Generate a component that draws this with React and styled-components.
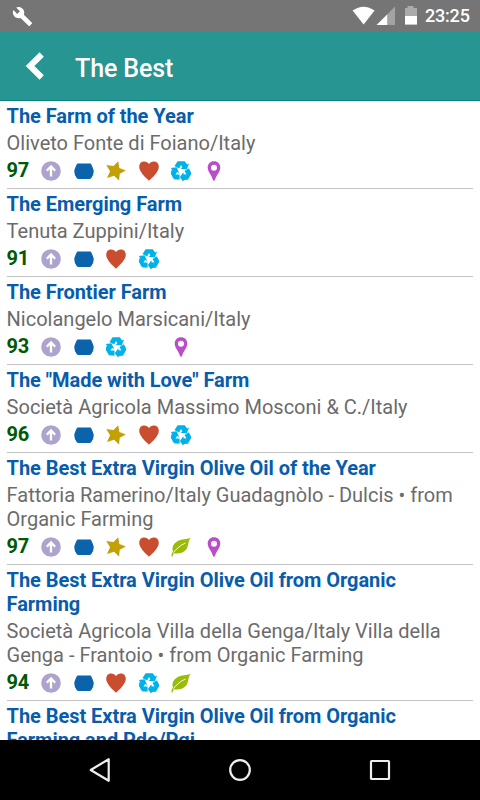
import React from "react";
import styled, { createGlobalStyle } from "styled-components";

const GlobalStyle = createGlobalStyle`
    * {
        box-sizing: border-box;
    }
    body {
        margin: 0;
        background: #fff;
        font-family: Roboto, "Liberation Sans", sans-serif;
    }
`;

const Screen = styled.div`
    display: flex;
    flex-direction: column;
    width: 480px;
    height: 800px;
    overflow: hidden;
`;

const StatusBar = styled.div`
    display: flex;
    flex: none;
    align-items: center;
    justify-content: space-between;
    height: 32px;
    padding: 0 10px 0 12px;
    background: #757575;
    color: #fff;
`;

const StatusIcons = styled.div`
    display: flex;
    align-items: center;
`;

const Clock = styled.span`
    width: 45px;
    margin-left: 8px;
    font-size: 18px;
    line-height: 32px;
    font-weight: 500;
    letter-spacing: -0.2px;
    white-space: nowrap;
`;

const Header = styled.header`
    display: flex;
    flex: none;
    align-items: center;
    height: 69px;
    padding-left: 25px;
    background: #279591;
    border-bottom: 1px solid #07817e;
`;

const Title = styled.h1`
    margin: 5px 0 0 31px;
    color: #fff;
    font-size: 25px;
    font-weight: 500;
    line-height: 32px;
    letter-spacing: -0.1px;
`;

const List = styled.ul`
    flex: 1;
    min-height: 0;
    margin: 0;
    padding: 0 7px 0 6.6px;
    overflow: hidden;
    list-style: none;
`;

const Item = styled.li`
    padding: 3px 0 4px;
    border-bottom: 1px solid #c4c4c6;
    font-size: 20px;
    line-height: 24px;
`;

const ItemTitle = styled.div`
    color: #075dab;
    font-weight: 700;
    letter-spacing: -0.05px;
`;

const ItemText = styled.div`
    margin-top: 3px;
    color: #6b6b6b;
`;

const Awards = styled.div`
    display: flex;
    align-items: center;
    height: 29px;
    padding-top: 2px;
`;

const Score = styled.span`
    width: 28.2px;
    margin-top: -1px;
    color: #005a05;
    font-weight: 700;
    letter-spacing: -0.2px;
`;

const Slot = styled.span`
    display: flex;
    align-items: center;
    justify-content: center;
    width: 32.6px;
    height: 22px;
`;

const NavBar = styled.nav`
    display: flex;
    flex: none;
    align-items: center;
    justify-content: space-between;
    height: 60px;
    padding: 0 88px;
    background: #000;
`;

const arrow = "M6.6.2h7.2l2.3 3.4 2-1-2.4 5.8-6.3-.6 2-1.2L10 3.9 8 7.4 3.5 4.9z";

const icons = {
    up: (
        <svg width="20" height="20" viewBox="0 0 20 20">
            <circle cx="10" cy="10" r="9.8" fill="#aea3cd" />
            <path d="M10 15.5V6M5.8 9.7 10 5.5l4.2 4.2" fill="none" stroke="#fff" strokeWidth="2.3" />
        </svg>
    ),
    bowl: (
        <svg width="20" height="20" viewBox="0 0 20 20">
            <path
                d="M4 2.4h12q1.1 0 1.4 1 .3 1.2 1.3 3 1 2 1 4.4 0 2.8-2.2 6-.8 1.2-2.1 1.2H4.6q-1.3 0-2.1-1.2-2.2-3.2-2.2-6 0-2.4 1-4.4 1-1.8 1.3-3 .3-1 1.4-1z"
                fill="#0b63ab"
            />
        </svg>
    ),
    star: (
        <svg width="20" height="20" viewBox="0 0 20 20">
            <path
                d="M12.2.2 13.4 6.9 19.8 9.6 13.8 12.7 13 19.6 8.1 14.7 1 16.9 4 10.3.3 3.9 7.5 5.1z"
                fill="#c2a006"
            />
        </svg>
    ),
    heart: (
        <svg width="20" height="20" viewBox="0 0 20 20">
            <path
                d="M10 3C8.6.7 5.8-.2 3.3.8-.1 2.2-.5 6.5 1.2 9.6c2 3.9 5.9 7.7 8.8 10.2 2.9-2.5 6.8-6.3 8.8-10.2 1.7-3.1 1.3-7.4-2.1-8.8C14.2-.2 11.4.7 10 3z"
                fill="#cb4d30"
            />
        </svg>
    ),
    recycle: (
        <svg width="20" height="20" viewBox="0 0 20 20" fill="#00b1ea">
            <path d={arrow} />
            <path d={arrow} transform="rotate(120 10 10.3)" />
            <path d={arrow} transform="rotate(240 10 10.3)" />
        </svg>
    ),
    leaf: (
        <svg width="20" height="20" viewBox="0 0 20 20">
            <path
                d="M19.6.8C16 2.6 10.5 1.7 6.1 4.5 2 7 .7 10.4 2 14.6.9 16.2.4 17.5.4 19.6h1.2c0-1.4.5-2.5 1.3-3.4 4.9 1 9.5-.2 12.2-3.6 2.8-3.6 1.6-8 4.5-11.8z"
                fill="#9abb0a"
            />
            <path d="M2.6 15.6C5.8 11.1 9.7 8.2 14.5 6" fill="none" stroke="#fff" strokeWidth=".9" />
        </svg>
    ),
    pin: (
        <svg width="20" height="20" viewBox="0 0 20 20">
            <path
                d="M10 .3c3.8 0 6.3 2.6 6.3 6.3 0 4.4-3.6 7-5.3 12.3-.3 1.1-1.7 1.1-2 0C7.3 13.6 3.7 11 3.7 6.6 3.7 2.9 6.2.3 10 .3zm0 3.4a3 3 0 1 0 0 6 3 3 0 0 0 0-6z"
                fill="#b84fc9"
                fillRule="evenodd"
            />
        </svg>
    ),
};

const farms = [
    {
        title: "The Farm of the Year",
        text: "Oliveto Fonte di Foiano/Italy",
        score: 97,
        awards: ["up", "bowl", "star", "heart", "recycle", "pin"],
    },
    {
        title: "The Emerging Farm",
        text: "Tenuta Zuppini/Italy",
        score: 91,
        awards: ["up", "bowl", "heart", "recycle"],
    },
    {
        title: "The Frontier Farm",
        text: "Nicolangelo Marsicani/Italy",
        score: 93,
        awards: ["up", "bowl", "recycle", "", "pin"],
    },
    {
        title: 'The "Made with Love" Farm',
        text: "Società Agricola Massimo Mosconi & C./Italy",
        score: 96,
        awards: ["up", "bowl", "star", "heart", "recycle"],
    },
    {
        title: "The Best Extra Virgin Olive Oil of the Year",
        text: "Fattoria Ramerino/Italy Guadagnòlo - Dulcis • from Organic Farming",
        score: 97,
        awards: ["up", "bowl", "star", "heart", "leaf", "pin"],
    },
    {
        title: "The Best Extra Virgin Olive Oil from Organic Farming",
        text: "Società Agricola Villa della Genga/Italy Villa della Genga - Frantoio • from Organic Farming",
        score: 94,
        awards: ["up", "bowl", "heart", "recycle", "leaf"],
    },
    {
        title: "The Best Extra Virgin Olive Oil from Organic Farming and Pdo/Pgi",
        awards: [],
    },
];

function FarmItem({ farm }) {
    return (
        <Item>
            <ItemTitle>{farm.title}</ItemTitle>
            {farm.text && <ItemText>{farm.text}</ItemText>}
            {farm.score && (
                <Awards>
                    <Score>{farm.score}</Score>
                    {farm.awards.map((name, i) => (
                        <Slot key={i}>{icons[name]}</Slot>
                    ))}
                </Awards>
            )}
        </Item>
    );
}

export default function App() {
    return (
        <Screen>
            <GlobalStyle />

            <StatusBar>
                <svg width="21" height="21" viewBox="0 0 24 24" fill="#fff">
                    <path d="M22.7 19l-9.1-9.1c.9-2.3.4-5-1.5-6.9-2-2-5-2.4-7.4-1.3L9 6 6 9 1.6 4.7C.4 7.1.9 10.1 2.9 12.1c1.9 1.9 4.6 2.4 6.9 1.5l9.1 9.1c.4.4 1 .4 1.4 0l2.3-2.3c.5-.4.5-1.1.1-1.4z" />
                </svg>
                <StatusIcons>
                    <svg width="65" height="32" viewBox="0 0 65 32">
                        <path d="M0.6 10.6Q11.6 3 22.6 10.6L11.6 24.6z" fill="#fff" />
                        <path d="M43 6.6V25H24.6z" fill="#a3a3a3" />
                        <path d="M35.2 14.4V25H24.6z" fill="#fff" />
                        <path d="M53 8h2.5V6h6v2H65v8H53z" fill="#ababab" />
                        <path d="M53 16h12v8.6H53z" fill="#fff" />
                    </svg>
                    <Clock>23:25</Clock>
                </StatusIcons>
            </StatusBar>

            <Header>
                <svg width="19" height="28" viewBox="0 0 19 28">
                    <path d="M16.7 2.5 5 14l11.7 11.5" fill="none" stroke="#fff" strokeWidth="6" />
                </svg>
                <Title>The Best</Title>
            </Header>

            <List>
                {farms.map((farm, i) => (
                    <FarmItem key={i} farm={farm} />
                ))}
            </List>

            <NavBar>
                <svg width="24" height="26" viewBox="0 0 24 26">
                    <path d="M20.7 2.2v21.6L2.7 13z" fill="none" stroke="#eee" strokeWidth="2.2" strokeLinejoin="round" />
                </svg>
                <svg width="24" height="24" viewBox="0 0 24 24">
                    <circle cx="12" cy="12" r="9.8" fill="none" stroke="#eee" strokeWidth="2.2" />
                </svg>
                <svg width="24" height="24" viewBox="0 0 24 24">
                    <rect x="3" y="3" width="18" height="18" rx=".6" fill="none" stroke="#eee" strokeWidth="2.2" />
                </svg>
            </NavBar>
        </Screen>
    );
}
